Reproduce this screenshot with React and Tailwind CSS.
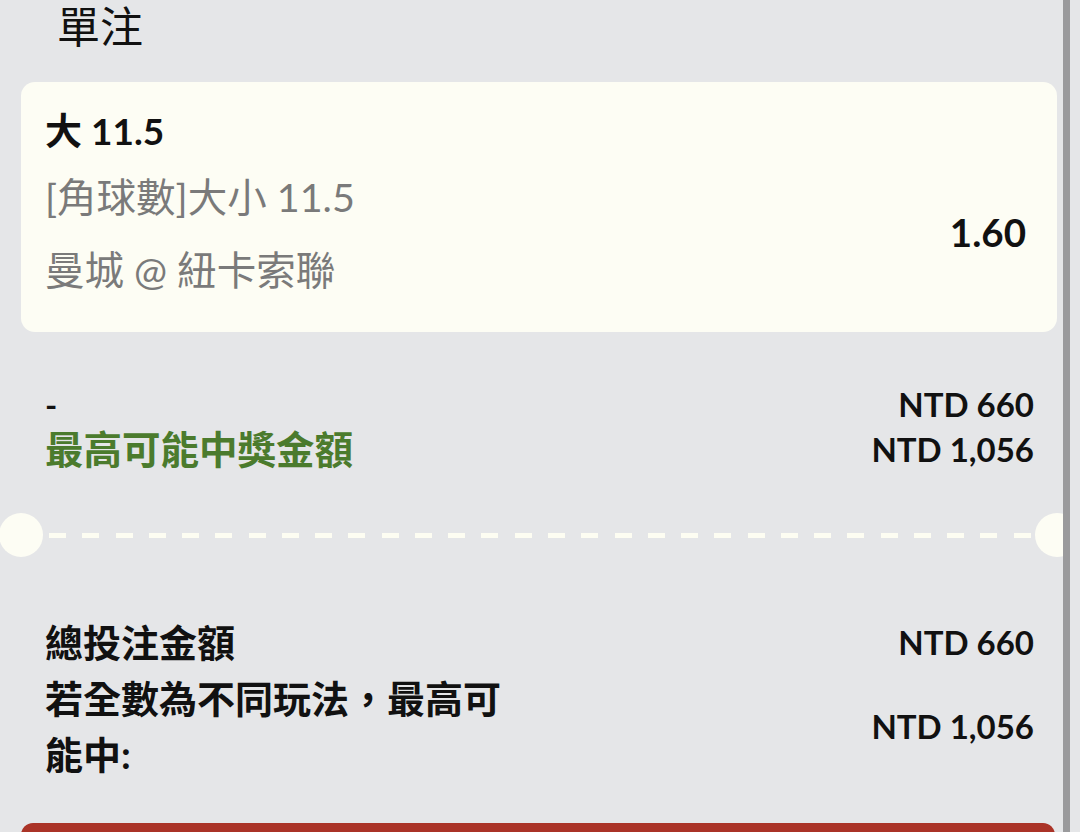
const dashes = Array.from({ length: 30 });

function AmountRow({ label, value, labelClass = "text-[#111]" }) {
  return (
    <div className="flex items-center justify-between">
      <div className={`w-[480px] text-[38px] font-bold leading-[56px] ${labelClass}`}>{label}</div>
      <div className="text-[33px] font-bold leading-[56px] text-[#111]">{value}</div>
    </div>
  );
}

export default function App() {
  return (
    <div className="flex h-[832px] w-[1080px] overflow-hidden bg-[#e5e6e8] font-['Lato','Noto_Sans_CJK_TC',sans-serif]">
      <div className="relative w-[1063px] shrink-0 overflow-hidden">
        <h1 className="h-[54px] pl-[57px] text-[43px] font-normal leading-[54px] text-[#111]">單注</h1>

        {/* selection card */}
        <div className="ml-[21px] mr-[6px] mt-[28px] h-[250px] rounded-[14px] bg-[#fdfdf4] pl-[24px] pr-[31px] pt-[27px]">
          <div className="text-[37px] font-bold leading-[44px] text-[#111]">大 11.5</div>
          <div className="mt-[7px] flex items-center justify-between">
            <div className="text-[39.5px] leading-[73px] text-[#7a7a7a]">
              <div>[角球數]大小 11.5</div>
              <div>曼城 @ 紐卡索聯</div>
            </div>
            <div className="text-[38.5px] font-bold text-[#111]">1.60</div>
          </div>
        </div>

        {/* stake / potential win */}
        <div className="mt-[50px] pl-[45px] pr-[29px]">
          <div className="flex items-center justify-between leading-[45px]">
            <span className="text-[33px] font-bold text-[#111]">-</span>
            <span className="text-[33px] font-bold text-[#111]">NTD 660</span>
          </div>
          <div className="flex items-center justify-between leading-[45px]">
            <span className="text-[38.5px] font-bold text-[#4b7b2d]">最高可能中獎金額</span>
            <span className="text-[33px] font-bold text-[#111]">NTD 1,056</span>
          </div>
        </div>

        {/* ticket divider */}
        <div className="relative mt-[41px] flex h-[44px] items-center">
          <div className="absolute left-[-1px] top-0 h-[44px] w-[44px] rounded-full bg-[#fdfdf4]" />
          <div className="ml-[49px] flex w-[982px] justify-between">
            {dashes.map((_, i) => (
              <span key={i} className="h-[5px] w-[17px] bg-[#fdfdf2]" />
            ))}
          </div>
          <div className="absolute right-[-16px] top-0 h-[44px] w-[44px] rounded-full bg-[#fdfdf4]" />
        </div>

        {/* totals */}
        <div className="mt-[57px] pl-[45px] pr-[29px]">
          <AmountRow label="總投注金額" value="NTD 660" />
          <AmountRow label="若全數為不同玩法，最高可能中:" value="NTD 1,056" />
        </div>

        <div className="ml-[21px] mr-[8px] mt-[41px] h-[60px] rounded-t-[12px] bg-[#aa3327]" />
      </div>
      <div className="w-[7px] shrink-0 bg-[#9a9a9c]" />
      <div className="flex-1" />
    </div>
  );
}
